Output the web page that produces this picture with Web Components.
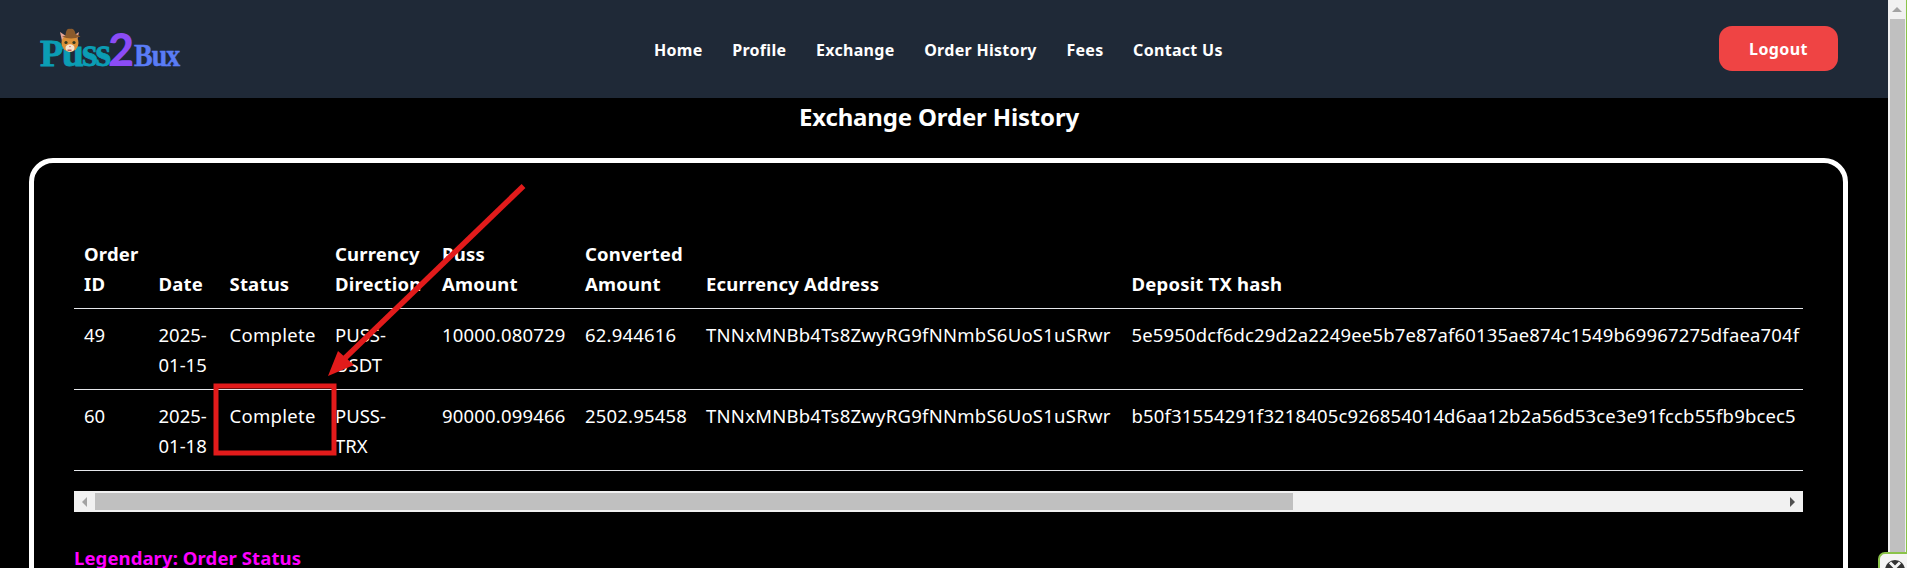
<!DOCTYPE html>
<html>
<head>
<meta charset="utf-8">
<title>Exchange Order History</title>
<style>
  html, body { margin: 0; height: 568px; overflow: hidden; background: #000; }
  body { font-family: "Noto Sans", "Open Sans", sans-serif; color: #fff; }
</style>
</head>
<body>
<app-page>
  <site-header></site-header>
  <h-title>Exchange Order History</h-title>
  <order-card></order-card>
</app-page>

<script>
// top bar
class SiteHeader extends HTMLElement {
  constructor() {
    super();
    this.attachShadow({ mode: "open" });
    const links = ["Home", "Profile", "Exchange", "Order History", "Fees", "Contact Us"];
    this.shadowRoot.innerHTML = `
      <style>
        :host { display: flex; align-items: center; height: 98px; background: #1f2937; padding: 0 50px 0 40px; box-sizing: border-box; position: relative; }
        .logo { display: flex; align-items: baseline; width: 140px; height: 40px; position: relative; line-height: 40px; font-family: "Liberation Serif", serif; font-weight: 700; }
        .p { font-size: 38px; color: #0b9db4; -webkit-text-stroke: .8px #0b9db4; letter-spacing: -1.5px; }
        .puss { font-size: 40px; color: #0b9db4; -webkit-text-stroke: .8px #0b9db4; letter-spacing: -2px; }
        .two { font: 900 45px/40px "Lato", sans-serif; color: #8b4cf6; margin-left: -1px; }
        .bux { display: inline-block; font-size: 31px; color: #5a7cf6; -webkit-text-stroke: .5px #5a7cf6; letter-spacing: -1px; transform: scaleX(.9); transform-origin: left; }
        .cat { position: absolute; left: 19px; top: -1px; width: 22px; height: 25px; }
        nav { position: absolute; left: 654px; top: 0; height: 98px; display: flex; align-items: center; gap: 29.6px; margin-top: 1px; }
        nav a { color: #fff; font-size: 16px; font-weight: 700; text-decoration: none; white-space: nowrap; letter-spacing: .3px; }
        button { margin-left: auto; margin-top: -1px; width: 119px; height: 45px; border: 0; border-radius: 13px; background: #ef4444; color: #fff; font: 700 16px "Noto Sans", sans-serif; letter-spacing: .4px; padding: 0; }
      </style>
      <div class="logo">
        <span class="p">P</span><span class="puss">uss</span><span class="two">2</span><span class="bux">Bux</span>
        <svg class="cat" viewBox="0 0 22 25">
          <path d="M1 4l6 4-4 5z" fill="#e5a596"/>
          <path d="M20 4l-6 4 4 5z" fill="#e5a596"/>
          <ellipse cx="11" cy="15" rx="8.5" ry="9" fill="#dc9038"/>
          <ellipse cx="11" cy="20" rx="4.5" ry="3.8" fill="#f6e3cd"/>
          <circle cx="7" cy="14.5" r="1.6" fill="#33391f"/>
          <circle cx="15" cy="14.5" r="1.6" fill="#33391f"/>
          <path d="M10 18h2l-1 1.4z" fill="#c9605c"/>
          <path d="M8.5 21.5h4v1.5h-4z" fill="#c2554f"/>
          <path d="M3 8.5c2-.3 3-.6 3.5-1C7 3 8 0 11 1c3-1 5 1 5.500 5 1.500.8 3.500 1.500 5 2.500-6 2.500-13 2.500-18.500 0z" fill="#8a5a2c"/>
        </svg>
      </div>
      <nav>${links.map(l => `<a href="#">${l}</a>`).join("")}</nav>
      <button>Logout</button>
    `;
  }
}
customElements.define("site-header", SiteHeader);

class HTitle extends HTMLElement {
  constructor() {
    super();
    this.attachShadow({ mode: "open" });
    this.shadowRoot.innerHTML = `
      <style>
        :host { display: block; height: 60px; text-align: center; padding-right: 10px; }
        h1 { margin: 0; font-size: 24px; font-weight: 700; line-height: 38px; letter-spacing: -.16px; }
      </style>
      <h1><slot></slot></h1>
    `;
  }
}
customElements.define("h-title", HTitle);

class ScrollBar extends HTMLElement {
  constructor() {
    super();
    this.attachShadow({ mode: "open" });
    this.shadowRoot.innerHTML = `
      <style>
        :host { display: flex; height: 21px; background: #f1f1f1; align-items: center; }
        .btn { width: 21px; flex: none; display: flex; align-items: center; justify-content: center; }
        .thumb { width: 1198px; height: 17px; background: #c0c0c0; flex: none; }
        .sp { flex: 1; }
        .l { border: 5px solid transparent; border-left: 0; border-right: 5px solid #a3a3a3; }
        .r { border: 5px solid transparent; border-right: 0; border-left: 5px solid #505050; }
      </style>
      <div class="btn"><i class="l"></i></div>
      <div class="thumb"></div>
      <div class="sp"></div>
      <div class="btn"><i class="r"></i></div>
    `;
  }
}
customElements.define("scroll-bar", ScrollBar);

class OrderTable extends HTMLElement {
  constructor() {
    super();
    this.attachShadow({ mode: "open" });
    const heads = ["Order<br>ID", "Date", "Status", "Currency<br>Direction", "Puss<br>Amount", "Converted<br>Amount", "Ecurrency Address", "Deposit TX hash"];
    const widths = [74.5, 71, 105.5, 107, 143, 121, 425.5, 700];
    // tracking per column, brings the fallback font to the reference's text widths
    const track = [0, 0, .28, 0, .18, .18, .24, .15];
    const addr = "TNNxMNBb4Ts8ZwyRG9fNNmbS6UoS1uSRwr";
    const rows = [
      ["49", "2025-01-15", "Complete", "PUSS-<br>USDT", "10000.080729", "62.944616", addr, "5e5950dcf6dc29d2a2249ee5b7e87af60135ae874c1549b69967275dfaea704f"],
      ["60", "2025-01-18", "Complete", "PUSS-<br>TRX", "90000.099466", "2502.95458", addr, "b50f31554291f3218405c926854014d6aa12b2a56d53ce3e91fccb55fb9bcec5"]
    ];
    this.shadowRoot.innerHTML = `
      <style>
        :host { display: block; }
        .wrap { overflow: hidden; }
        table { border-collapse: collapse; table-layout: fixed; width: ${widths.reduce((a, b) => a + b, 0)}px; font-size: 18.5px; line-height: 30px; }
        th, td { text-align: left; border-bottom: 1px solid #e5e7eb; }
        th { font-weight: 700; padding: 10px 10px 9px; vertical-align: bottom; letter-spacing: .2px; white-space: nowrap; }
        td { padding: 11px 10px 9px; vertical-align: top; }
        td.h { white-space: nowrap; }
      </style>
      <div class="wrap">
        <table>
          <colgroup>${widths.map(w => `<col style="width:${w}px">`).join("")}</colgroup>
          <thead><tr>${heads.map(h => `<th>${h}</th>`).join("")}</tr></thead>
          <tbody>${rows.map(r => `<tr>${r.map((c, i) => `<td class="${i > 3 ? "h" : ""}" style="letter-spacing:${track[i]}px">${c}</td>`).join("")}</tr>`).join("")}</tbody>
        </table>
      </div>
      <scroll-bar style="margin-top:20px"></scroll-bar>
    `;
  }
}
customElements.define("order-table", OrderTable);

class OrderCard extends HTMLElement {
  constructor() {
    super();
    this.attachShadow({ mode: "open" });
    this.shadowRoot.innerHTML = `
      <style>
        :host { display: block; margin: 0 40px 0 29px; border: 5px solid #fff; border-radius: 24px; padding: 66px 40px 40px; height: 600px; box-sizing: border-box; }
        .legend { margin-top: 31px; color: #f0f; font-size: 18.5px; font-weight: 700; line-height: 30px; letter-spacing: .1px; }
      </style>
      <order-table></order-table>
      <div class="legend">Legendary: Order Status</div>
    `;
  }
}
customElements.define("order-card", OrderCard);

class AppPage extends HTMLElement {
  constructor() {
    super();
    this.attachShadow({ mode: "open" });
    this.shadowRoot.innerHTML = `
      <style>
        :host { display: flex; height: 568px; overflow: hidden; position: relative; }
        main { flex: 1; min-width: 0; }
        .vbar { width: 19px; flex: none; background: #f1f1f1; border-right: 1px solid #8bc34a; box-sizing: border-box; display: flex; flex-direction: column; align-items: center; }
        .up { height: 19px; flex: none; display: flex; align-items: center; justify-content: center; }
        .up i { border: 5px solid transparent; border-top: 0; border-bottom: 5px solid #a3a3a3; }
        .thumb { flex: 1; width: 15px; background: #c0c0c0; }
        .ext { position: absolute; right: 0; bottom: 0; width: 29px; height: 16px; background: #f4f4f4; border: 2px solid #8bc34a; border-right: 0; border-bottom: 0; border-radius: 7px 0 0 0; box-sizing: border-box; overflow: hidden; }
        .ext svg { position: absolute; left: 5px; top: 6px; }
        .mark { position: absolute; left: 0; top: 0; pointer-events: none; }
      </style>
      <main><slot></slot></main>
      <div class="vbar"><div class="up"><i></i></div><div class="thumb"></div></div>
      <div class="ext">
        <svg width="20" height="20" viewBox="0 0 20 20"><circle cx="10" cy="10" r="10" fill="#333"/><path d="M5 2.500l5 5 5-5" stroke="#f4f4f4" stroke-width="3" fill="none"/></svg>
      </div>
      <!-- red annotation drawn over the screenshot -->
      <svg class="mark" width="1907" height="568">
        <rect x="216" y="386" width="118" height="67" fill="none" stroke="#e21b1b" stroke-width="5"/>
        <path d="M523.500 186 345 358" stroke="#e21b1b" stroke-width="5.5" fill="none"/>
        <path d="M328 376l10-25 16 14z" fill="#e21b1b"/>
      </svg>
    `;
  }
}
customElements.define("app-page", AppPage);
</script>
</body>
</html>
